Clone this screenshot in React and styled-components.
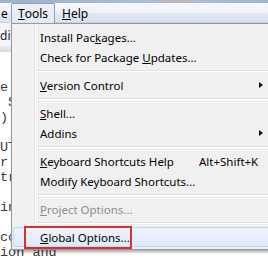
import React from 'react';
import styled, { createGlobalStyle } from 'styled-components';

const GlobalStyle = createGlobalStyle`
  html, body { margin: 0; padding: 0; background: #fff; }
  body { width: 268px; height: 263px; overflow: hidden; }
`;

const Screen = styled.div`
  position: relative;
  width: 268px;
  height: 263px;
  overflow: hidden;
  background: #fff;
  font-family: "Noto Sans", "Liberation Sans", sans-serif;
`;

const TitleStrip = styled.div`
  height: 3px;
  background: linear-gradient(to right, #9fb2c8 0%, #aebdd0 58%, #c9aebb 66%, #aebdd0 74%, #a3b5ca 100%);
`;

const MenuBar = styled.div`
  display: flex;
  height: 20px;
  box-sizing: border-box;
  background: linear-gradient(#f5f8fc 0%, #eef2f8 50%, #e0e8f3 51%, #d9e3f0 100%);
  border-bottom: 1px solid #c9d5e4;
`;

const MenuTitle = styled.div`
  display: flex;
  align-items: center;
  box-sizing: border-box;
  height: ${(p) => (p.$open ? '20px' : '19px')};
  padding: 0 ${(p) => (p.$clip ? '0' : '6px')};
  width: ${(p) => p.$width || 'auto'};
  font-size: 12px;
  color: #000;
  border: 1px solid ${(p) => (p.$open ? '#8e9eb4' : 'transparent')};
  border-bottom: none;
  border-radius: 2px 2px 0 0;
  background: ${(p) => (p.$open ? 'linear-gradient(#edf1f7, #e3e9f2)' : 'transparent')};
`;

const Toolbar = styled.div`
  height: 23px;
  display: flex;
  align-items: center;
  padding-top: 2px;
  box-sizing: border-box;
  font-size: 12px;
  color: #222;
  background: #f3f5f8;
`;

const PaneDivider = styled.div`
  height: 6px;
  background: linear-gradient(#e9edf2, #d3dae3);
`;

const Console = styled.pre`
  margin: 0;
  padding-top: 28px;
  font-family: "Liberation Mono", monospace;
  font-size: 13.5px;
  line-height: 15px;
  color: #3a3a3a;
`;

const Dropdown = styled.div`
  position: absolute;
  top: 23px;
  left: 11px;
  width: 290px;
  box-sizing: border-box;
  padding: 3px 0 2px 1px;
  border: 1px solid #979797;
  background: linear-gradient(to right, #f1f1f1 22px, #e2e3e3 22px, #e2e3e3 23px, #ffffff 23px, #ffffff 24px, #f0f0f0 24px);
  box-shadow: 2px 2px 3px rgba(0, 0, 0, 0.35);
`;

const Item = styled.div`
  position: relative;
  display: grid;
  grid-template-columns: 159px 60px 1fr;
  align-items: center;
  height: 20px;
  box-sizing: border-box;
  padding-left: 27px;
  margin-right: 2px;
  font-size: 11.5px;
  color: ${(p) => (p.$disabled ? '#8c8c8c' : '#000')};
  white-space: nowrap;
  ${(p) =>
    p.$active &&
    `
    background: linear-gradient(#eef4fc, #dde9f8);
    box-shadow: inset 0 0 0 1px #c3d8f2;
    border-radius: 2px;
  `}
`;

const Shortcut = styled.span`
  font-size: 11.5px;
`;

const SubArrow = styled.span`
  justify-self: start;
  width: 0;
  height: 0;
  border-left: 4px solid #111;
  border-top: 3.5px solid transparent;
  border-bottom: 3.5px solid transparent;
`;

const Separator = styled.div`
  height: 1px;
  margin: 3px 2px 3px 23px;
  background: #e0e0e0;
  border-bottom: 1px solid #ffffff;
`;

const Key = styled.span`
  text-decoration: underline;
  text-underline-offset: 1px;
`;

const Callout = styled.div`
  position: absolute;
  left: 11px;
  top: -1px;
  width: 108px;
  height: 23px;
  box-sizing: border-box;
  border: 2px solid #d8302c;
`;

const startup = [
  'R version 3.3.2 (2016-10-31) -- "Sincere Pumpkin Patch"',
  'Copyright (C) 2016 The R Foundation for Statistical Computing',
  'Platform: i386-w64-mingw32/i386 (32-bit)',
  '',
  'R is free software and comes with ABSOLUTELY NO WARRANTY.',
  'You are welcome to redistribute it under certain conditions.',
  "Type 'license()' or 'licence()' for distribution details.",
  '',
  '  Natural language support but running in an English locale',
  '',
  'R is a collaborative project with many contributors.',
  "Type 'contributors()' for more information and",
];

// the console pane is scrolled so that column 39 sits at the left edge;
// only the last line shows below the open menu
const visible = startup
  .map((line, i) => (i === startup.length - 1 ? line.slice(39) : line.slice(39, 41)))
  .join('\n');

const App = () => {
  return (
    <Screen>
      <GlobalStyle />
      <TitleStrip />
      <MenuBar>
        <MenuTitle $clip $width="11px">e</MenuTitle>
        <MenuTitle $open>
          <Key>T</Key>ools
        </MenuTitle>
        <MenuTitle>
          <Key>H</Key>elp
        </MenuTitle>
      </MenuBar>
      <Toolbar>di</Toolbar>
      <PaneDivider />
      <Console>{visible}</Console>

      <Dropdown>
        <Item>
          <span>
            Install Pac<Key>k</Key>ages...
          </span>
        </Item>
        <Item>
          <span>
            Check for Package <Key>U</Key>pdates...
          </span>
        </Item>
        <Separator />
        <Item>
          <span>
            <Key>V</Key>ersion Control
          </span>
          <span />
          <SubArrow />
        </Item>
        <Separator />
        <Item>
          <span>
            <Key>S</Key>hell...
          </span>
        </Item>
        <Item>
          <span>Addins</span>
          <span />
          <SubArrow />
        </Item>
        <Separator />
        <Item>
          <span>
            <Key>K</Key>eyboard Shortcuts Help
          </span>
          <Shortcut>Alt+Shift+K</Shortcut>
        </Item>
        <Item>
          <span>Modify Keyboard Shortcuts...</span>
        </Item>
        <Separator />
        <Item $disabled>
          <span>
            <Key>P</Key>roject Options...
          </span>
        </Item>
        <Separator />
        <Item $active>
          <span>
            <Key>G</Key>lobal Options...
          </span>
          <Callout />
        </Item>
      </Dropdown>
    </Screen>
  );
};

export default App;
